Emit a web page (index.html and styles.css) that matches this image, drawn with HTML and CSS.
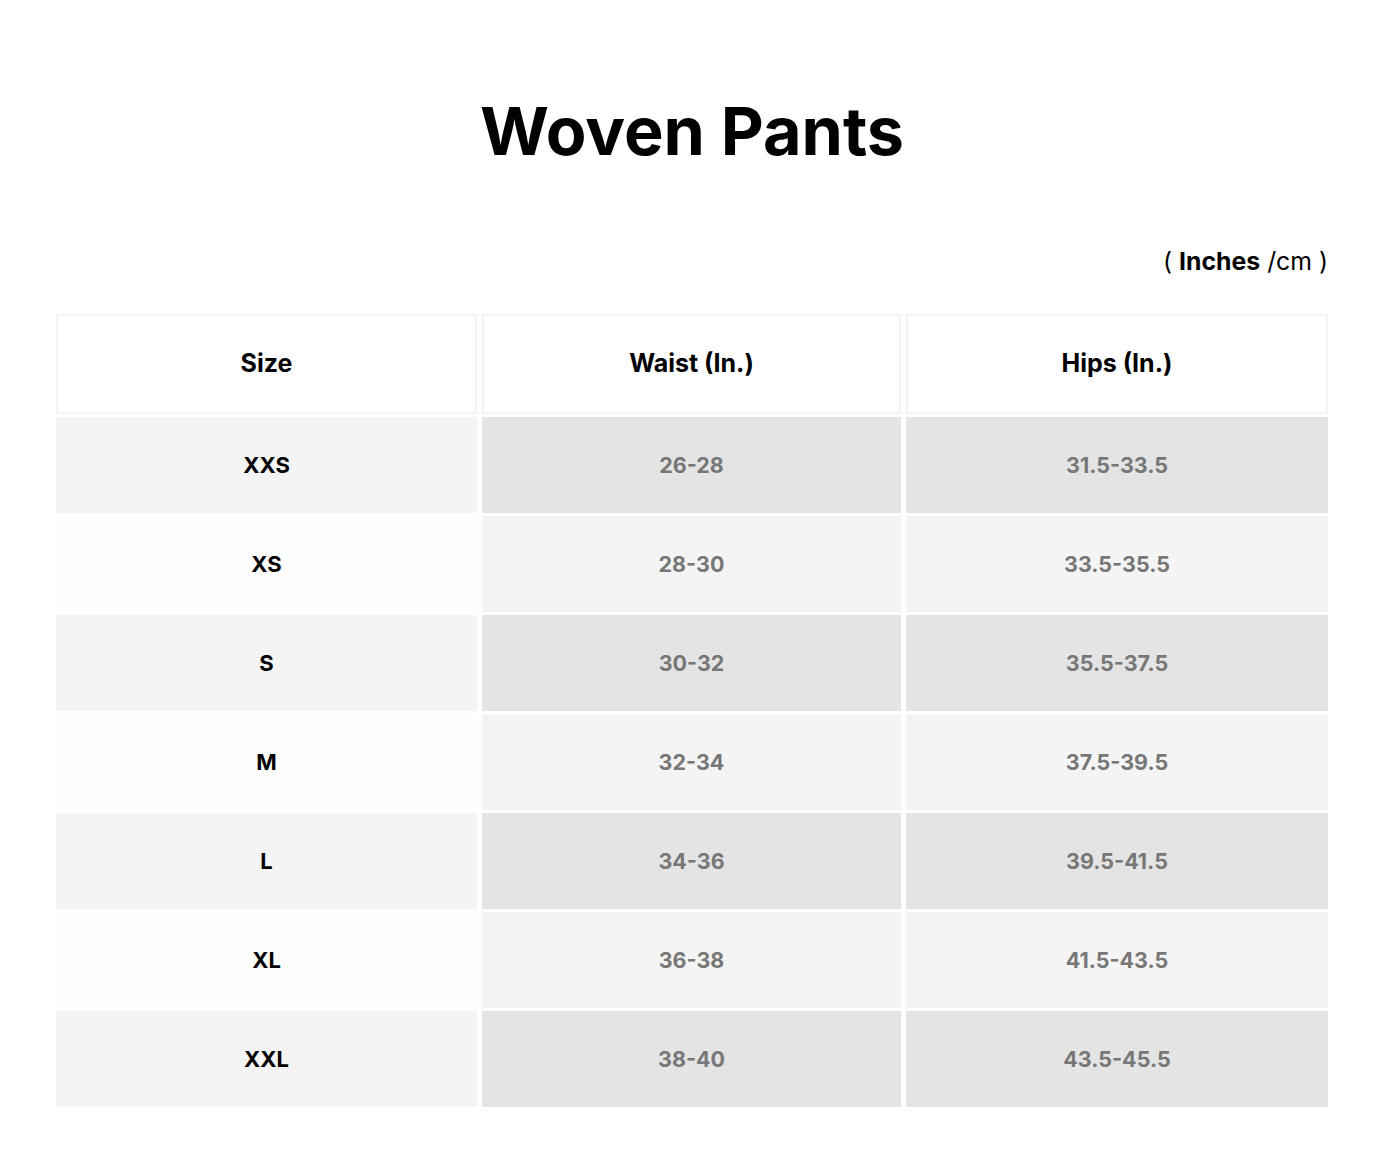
FILE: index.html
```html
<!DOCTYPE html>
<html>
<head>
<meta charset="utf-8">
<link rel="stylesheet" href="styles.css">
</head>
<body>
<main class="page">
  <h1 class="title">Woven Pants</h1>
  <div class="units">( <b>Inches</b> /cm )</div>
  <div class="chart">
    <div class="cell head">Size</div>
    <div class="cell head">Waist (In.)</div>
    <div class="cell head">Hips (In.)</div>

    <div class="cell size odd">XXS</div>
    <div class="cell val odd">26-28</div>
    <div class="cell val odd">31.5-33.5</div>

    <div class="cell size even">XS</div>
    <div class="cell val even">28-30</div>
    <div class="cell val even">33.5-35.5</div>

    <div class="cell size odd">S</div>
    <div class="cell val odd">30-32</div>
    <div class="cell val odd">35.5-37.5</div>

    <div class="cell size even">M</div>
    <div class="cell val even">32-34</div>
    <div class="cell val even">37.5-39.5</div>

    <div class="cell size odd">L</div>
    <div class="cell val odd">34-36</div>
    <div class="cell val odd">39.5-41.5</div>

    <div class="cell size even">XL</div>
    <div class="cell val even">36-38</div>
    <div class="cell val even">41.5-43.5</div>

    <div class="cell size odd">XXL</div>
    <div class="cell val odd">38-40</div>
    <div class="cell val odd">43.5-45.5</div>
  </div>
</main>
</body>
</html>
```

FILE: styles.css
```css
* { box-sizing: border-box; }
html, body { margin: 0; padding: 0; background: #fff; }
body {
  font-family: Inter, "Open Sans", "Liberation Sans", sans-serif;
  color: #000;
}
.page {
  width: 1272px;
  margin: 0 0 0 56px;
  padding-top: 89px;
}
.title {
  margin: 0;
  text-align: center;
  font-size: 66.5px;
  line-height: 84px;
  font-weight: 700;
  letter-spacing: 0;
}
.units {
  margin-top: 73px;
  text-align: right;
  font-size: 24.8px;
  line-height: 30px;
}
.units b { font-weight: 700; }
.chart {
  margin-top: 38px;
  display: grid;
  grid-template-columns: 421px 419px 422px;
  column-gap: 5px;
  row-gap: 3px;
}
.cell {
  height: 96px;
  display: flex;
  align-items: center;
  justify-content: center;
  font-weight: 700;
}
.head {
  height: 100px;
  background: #fff;
  border: 2px solid #f3f3f3;
  font-size: 25px;
  color: #000;
  padding-bottom: 2px;
}
.size { color: #000; font-size: 22px; }
.val { color: #777; font-size: 21.5px; }
.size.odd { background: #f4f4f4; }
.val.odd { background: #e4e4e4; }
.size.even { background: #fefefe; }
.val.even { background: #f4f4f4; }
```
